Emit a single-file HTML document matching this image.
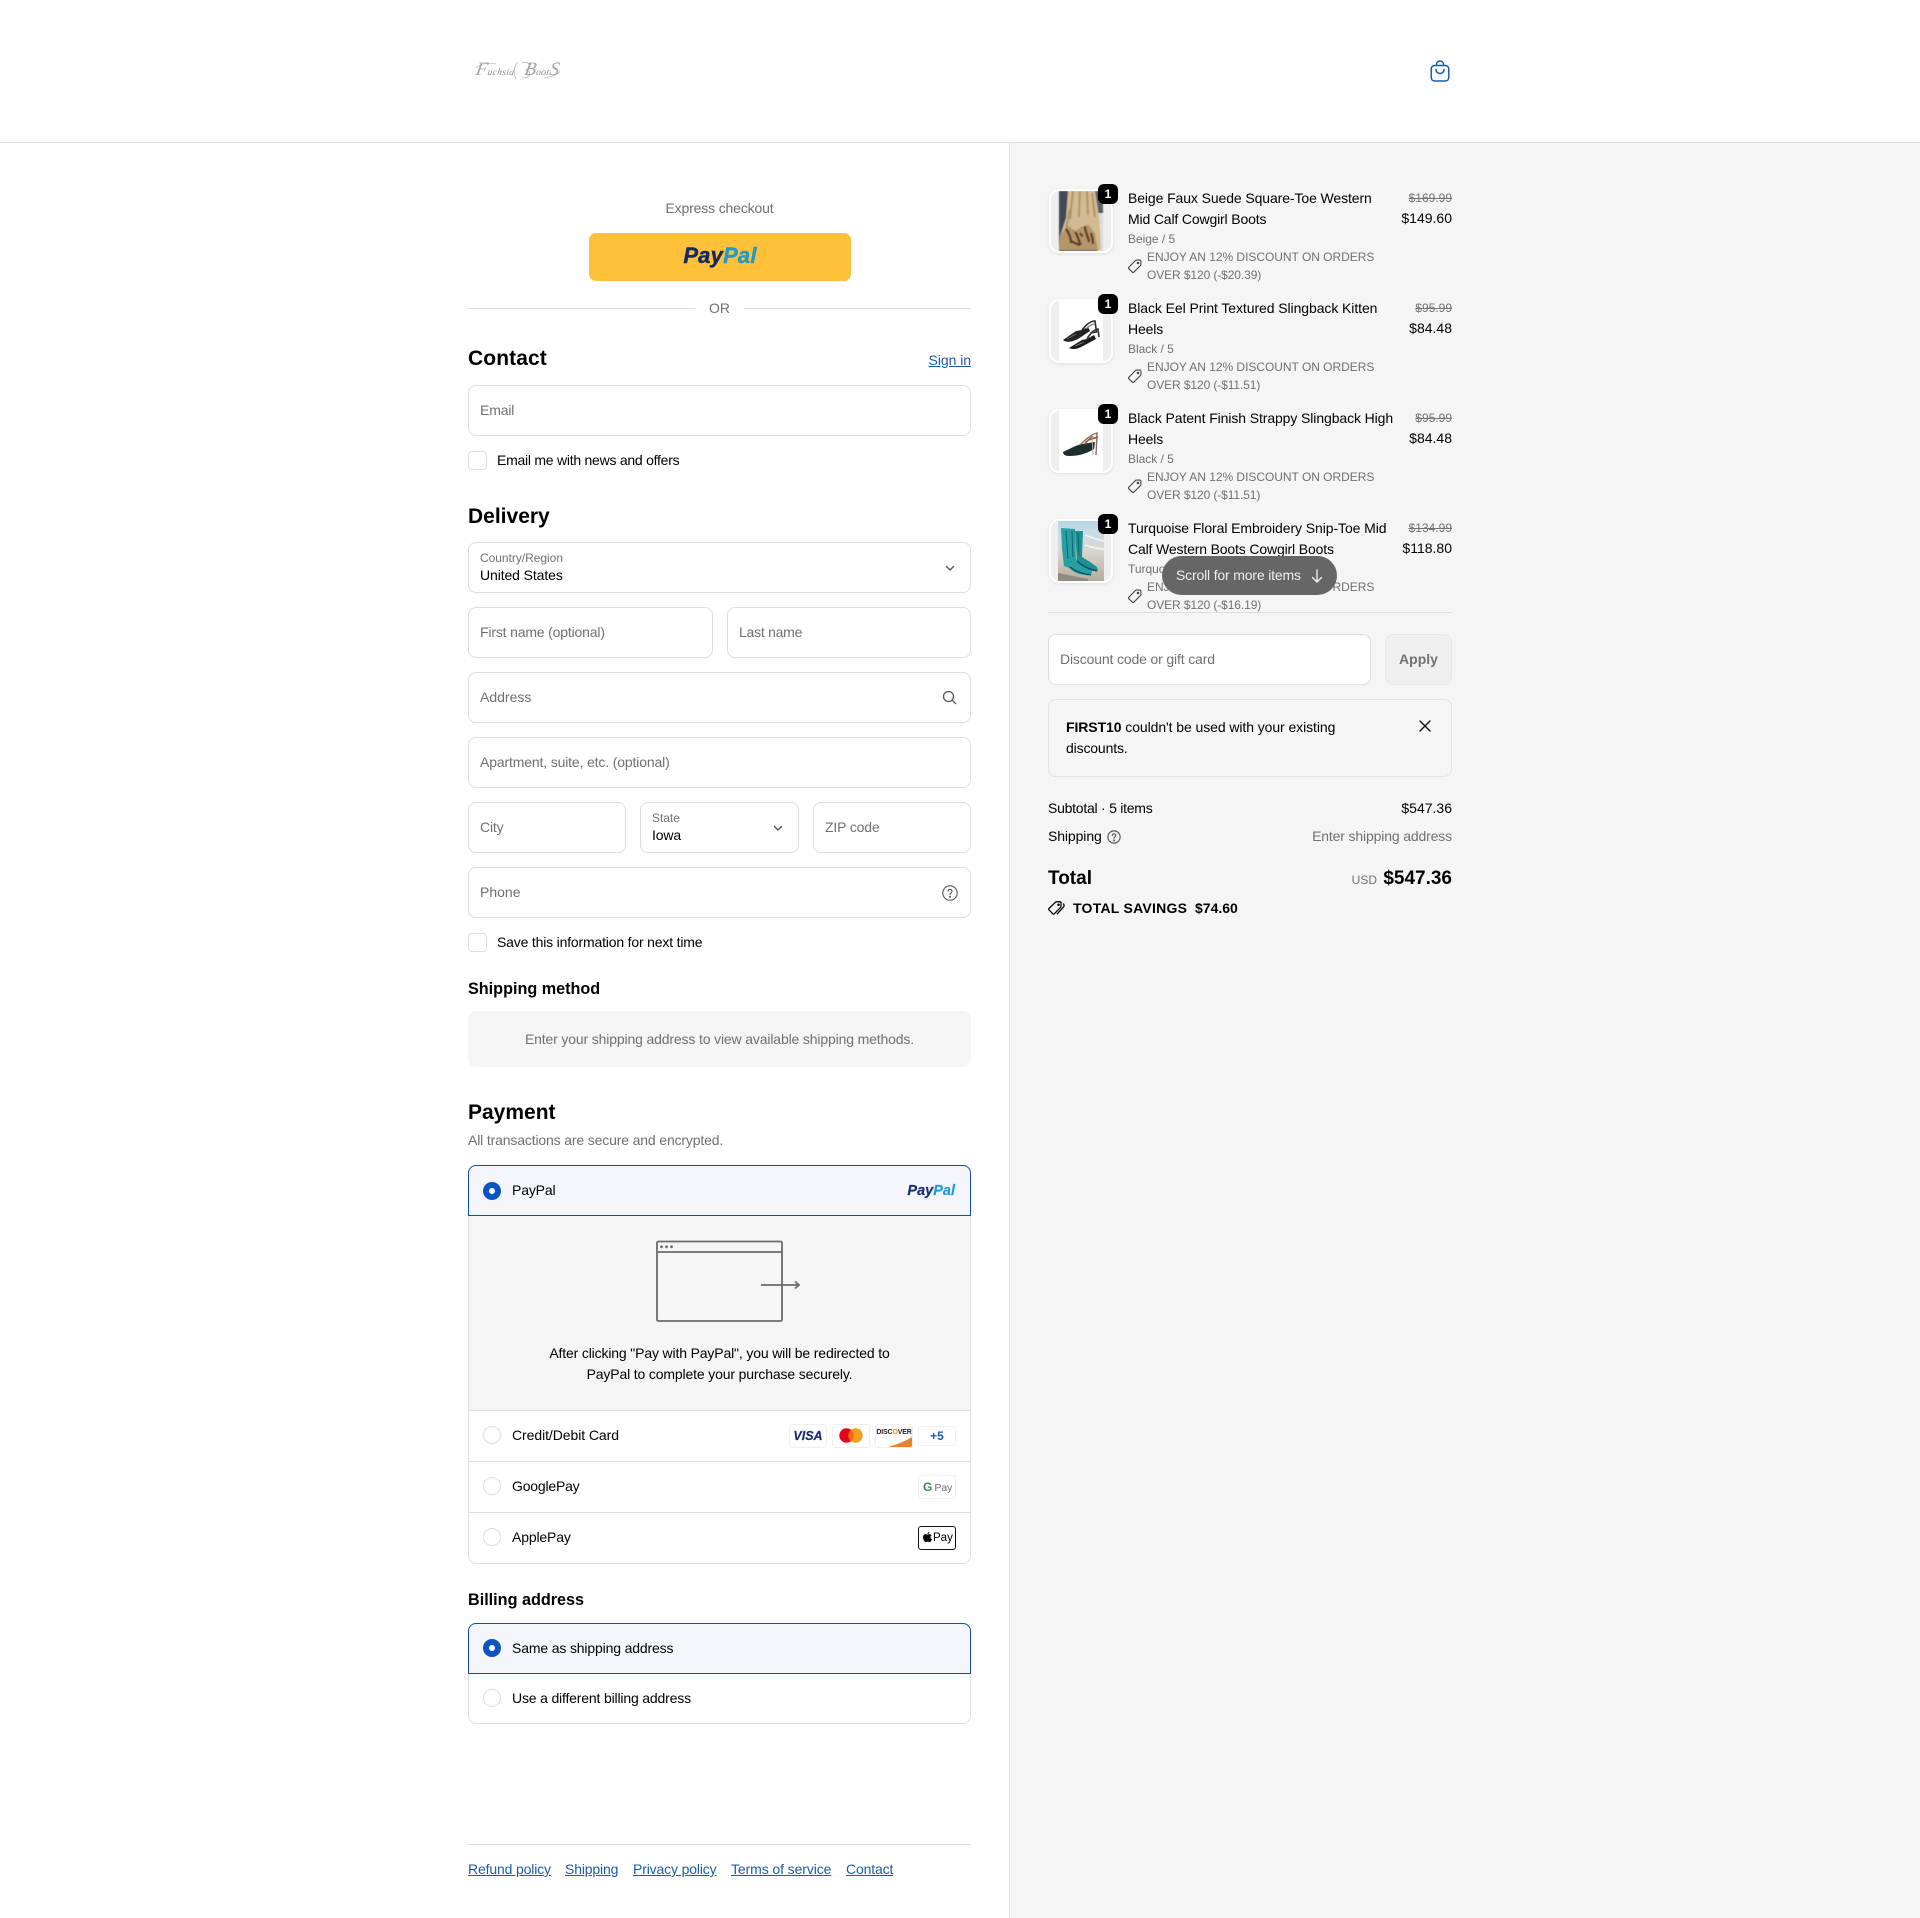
<!DOCTYPE html>
<html lang="en"><head><meta charset="utf-8"><title>Checkout</title>
<style>
html,body{margin:0;padding:0;background:#fff}
#p{position:relative;width:1920px;height:1918px;overflow:hidden;background:#fff;font-family:"Liberation Sans",Arial,sans-serif;font-size:14px;color:#000}
.t{position:absolute;white-space:nowrap;line-height:20px;height:20px;letter-spacing:-.15px}
.z{letter-spacing:0}
.g{color:#707070}
.b{font-weight:700}
.r{text-align:right}
.f{position:absolute;box-sizing:border-box;border:1px solid #dedede;border-radius:8px;background:#fff;height:51px}
.a{color:#1a5ca8;text-decoration:underline}
.cb{position:absolute;box-sizing:border-box;left:468px;width:19px;height:19px;border:1px solid #dedede;border-radius:4px;background:#fff}
.rd{position:absolute;box-sizing:border-box;left:483px;width:18px;height:18px;border-radius:50%;border:1px solid #dedede;background:#fff}
.rs{position:absolute;box-sizing:border-box;left:483px;width:18px;height:18px;border-radius:50%;background:#fff;border:6px solid #0b55c0}
.pi{position:absolute;box-sizing:border-box;width:38px;height:24px;border:1px solid #efefef;border-radius:3px;background:#fff;overflow:hidden;white-space:nowrap}
.th{position:absolute;left:1049px;width:64px;height:64px;box-sizing:border-box;border-radius:10px;overflow:hidden;background:#eee;border:2px solid #fff;box-shadow:0 1px 3px rgba(0,0,0,.1)}
.bd{position:absolute;left:1098px;width:20px;height:20px;border-radius:6px;background:#000;color:#fff;font-weight:700;font-size:12px;line-height:20px;text-align:center}
.s{position:absolute;display:block}
.m{font-size:12px;letter-spacing:-.03px}
</style></head><body><div id="p">

<!-- header -->
<div style="position:absolute;left:0;top:142px;width:1920px;height:1px;background:#dedede"></div>
<div class="t" style="left:476px;top:60px;font-family:'Liberation Serif',serif;font-style:italic;font-size:9.5px;color:#8a8a8a;letter-spacing:.35px;transform:skewX(-10deg)"><span style="font-size:19px;color:#a5a5a5">F</span>uchsia <span style="font-size:19px;color:#a5a5a5;margin-left:7px">B</span>oot<span style="font-size:19px;color:#a5a5a5">S</span></div>
<svg class="s" style="left:474px;top:58px" width="90" height="26" viewBox="0 0 90 26" fill="none" stroke="#a0a0a0" stroke-width=".6"><path d="M2 10C7 5 14 5 22 6"/><path d="M44 4C40 8 39 14 42 21"/><path d="M48 5C55 3 60 8 52 12c6 1 5 8-4 8"/><path d="M70 20c6-1 14-3 16-7"/></svg>
<svg class="s" style="left:1430px;top:60px" width="20" height="22" viewBox="0 0 20 22" fill="none" stroke="#1a5ca8" stroke-width="1.5" stroke-linecap="round"><rect x="1.200" y="5.500" width="17.600" height="15.500" rx="3.500"/><path d="M6.500 5.500V4.500a3.500 3.500 0 0 1 7 0v1"/><path d="M6 9.500a4 4 0 0 0 8 0"/></svg>

<!-- sidebar -->
<div style="position:absolute;left:1009px;top:143px;width:911px;height:1775px;background:#f5f5f5;border-left:1px solid #dedede;box-sizing:border-box"></div>

<!-- express -->
<div class="t g" style="left:468px;width:503px;text-align:center;top:198px">Express checkout</div>
<div style="position:absolute;left:589px;top:233px;width:262px;height:48px;border-radius:7px;background:#ffc03a"></div>
<div class="t" style="left:589px;width:262px;text-align:center;top:245px;font-size:22px;line-height:22px;height:22px;font-weight:700;font-style:italic;color:#142a60;letter-spacing:.2px;-webkit-text-stroke:.4px">Pay<span style="color:#1f9bc6">Pal</span></div>
<div style="position:absolute;left:468px;top:308px;width:227px;height:1px;background:#dedede"></div>
<div style="position:absolute;left:744px;top:308px;width:227px;height:1px;background:#dedede"></div>
<div class="t g z" style="left:468px;width:503px;text-align:center;top:298px">OR</div>

<!-- contact -->
<div class="t b z" style="left:468px;top:349px;font-size:21px;letter-spacing:.1px">Contact</div>
<div class="t a r" style="right:949px;top:350px;letter-spacing:-.05px">Sign in</div>
<div class="f" style="left:468px;top:385px;width:503px"></div>
<div class="t g" style="left:480px;top:400px">Email</div>
<div class="cb" style="top:451px"></div>
<div class="t" style="left:497px;top:450px;letter-spacing:-.25px">Email me with news and offers</div>

<!-- delivery -->
<div class="t b z" style="left:468px;top:507px;font-size:21px">Delivery</div>
<div class="f" style="left:468px;top:542px;width:503px"></div>
<div class="t g m" style="left:480px;top:548px">Country/Region</div>
<div class="t" style="left:480px;top:565px;letter-spacing:-.1px">United States</div>
<svg class="s" style="left:944px;top:562px" width="12" height="12" viewBox="0 0 12 12" fill="none" stroke="#555" stroke-width="1.400" stroke-linecap="round" stroke-linejoin="round"><path d="M2.500 4.500 6 8l3.500-3.500"/></svg>

<div class="f" style="left:468px;top:607px;width:245px"></div>
<div class="t g" style="left:480px;top:622px;letter-spacing:-.17px">First name (optional)</div>
<div class="f" style="left:727px;top:607px;width:244px"></div>
<div class="t g" style="left:739px;top:622px;letter-spacing:-.25px">Last name</div>

<div class="f" style="left:468px;top:672px;width:503px"></div>
<div class="t g z" style="left:480px;top:687px">Address</div>
<svg class="s" style="left:942px;top:690px" width="15" height="15" viewBox="0 0 15 15" fill="none" stroke="#555" stroke-width="1.300" stroke-linecap="round"><circle cx="6.500" cy="6.500" r="5"/><path d="m10.300 10.300 3.400 3.400"/></svg>

<div class="f" style="left:468px;top:737px;width:503px"></div>
<div class="t g" style="left:480px;top:752px">Apartment, suite, etc. (optional)</div>

<div class="f" style="left:468px;top:802px;width:158px"></div>
<div class="t g" style="left:480px;top:817px">City</div>
<div class="f" style="left:640px;top:802px;width:159px"></div>
<div class="t g m" style="left:652px;top:808px">State</div>
<div class="t" style="left:652px;top:825px">Iowa</div>
<svg class="s" style="left:772px;top:822px" width="12" height="12" viewBox="0 0 12 12" fill="none" stroke="#555" stroke-width="1.400" stroke-linecap="round" stroke-linejoin="round"><path d="M2.500 4.500 6 8l3.500-3.500"/></svg>
<div class="f" style="left:813px;top:802px;width:158px"></div>
<div class="t g" style="left:825px;top:817px">ZIP code</div>

<div class="f" style="left:468px;top:867px;width:503px"></div>
<div class="t g z" style="left:480px;top:882px">Phone</div>
<svg class="s" style="left:942px;top:885px" width="16" height="16" viewBox="0 0 16 16" fill="none" stroke="#555" stroke-width="1.100" stroke-linecap="round"><circle cx="8" cy="8" r="7.200"/><path d="M6 6.200a2 2 0 1 1 3 1.800c-.7.400-1 .8-1 1.600"/><circle cx="8" cy="11.800" r=".5" fill="#555"/></svg>
<div class="cb" style="top:933px"></div>
<div class="t" style="left:497px;top:932px;letter-spacing:-.18px">Save this information for next time</div>

<div class="t b z" style="left:468px;top:979px;font-size:16.200px">Shipping method</div>
<div style="position:absolute;left:468px;top:1011px;width:503px;height:56px;border-radius:8px;background:#f5f5f5"></div>
<div class="t g" style="left:468px;width:503px;text-align:center;top:1029px">Enter your shipping address to view available shipping methods.</div>

<!-- payment -->
<div class="t b z" style="left:468px;top:1103px;font-size:21px">Payment</div>
<div class="t g" style="left:468px;top:1130px">All transactions are secure and encrypted.</div>

<div style="position:absolute;left:468px;top:1215px;width:503px;height:349px;box-sizing:border-box;border:1px solid #dedede;border-top:0;border-radius:0 0 8px 8px;background:#fff"></div>
<div style="position:absolute;left:469px;top:1216px;width:501px;height:195px;background:#f5f5f5;border-bottom:1px solid #dedede;box-sizing:border-box"></div>
<div style="position:absolute;left:468px;top:1165px;width:503px;height:51px;box-sizing:border-box;border:1px solid #0f4f9e;border-radius:8px 8px 0 0;background:#f4f6fc"></div>
<div class="rs" style="top:1182px"></div>
<div class="t" style="left:512px;top:1180px">PayPal</div>
<div class="t r z" style="right:965px;top:1181px;font-size:14.500px;font-weight:700;font-style:italic;color:#1b2f6b;-webkit-text-stroke:.2px">Pay<span style="color:#1f9bd6">Pal</span></div>

<svg class="s" style="left:655px;top:1239px" width="148" height="85" viewBox="0 0 148 85" fill="none" stroke="#6b6b6b" stroke-width="1.800"><rect x="2" y="2.500" width="125" height="79.500" rx="1.500"/><path d="M2 13h125"/><path d="M106 46h38M140 42.500l4 3.500-4 3.500"/><circle cx="6.500" cy="7.800" r="1.400" fill="#6b6b6b" stroke="none"/><circle cx="11.500" cy="7.800" r="1.400" fill="#6b6b6b" stroke="none"/><circle cx="16.500" cy="7.800" r="1.400" fill="#6b6b6b" stroke="none"/></svg>
<div class="t" style="left:468px;width:503px;text-align:center;top:1343px">After clicking "Pay with PayPal", you will be redirected to</div>
<div class="t" style="left:468px;width:503px;text-align:center;top:1364px">PayPal to complete your purchase securely.</div>

<div class="rd" style="top:1426px"></div>
<div class="t" style="left:512px;top:1425px;letter-spacing:-.07px">Credit/Debit Card</div>
<div class="pi" style="left:789px;top:1424px;text-align:center;font:italic 700 12.500px/22px 'Liberation Sans',sans-serif;color:#1a2a70;-webkit-text-stroke:.2px">VISA</div>
<div class="pi" style="left:832px;top:1424px"><svg width="36" height="22" viewBox="0 0 36 22"><circle cx="13.500" cy="10.500" r="7.200" fill="#e2051b"/><circle cx="22.500" cy="10.500" r="7.200" fill="#f69e1e"/><path d="M18 4.900a7.200 7.200 0 0 1 0 11.200 7.200 7.200 0 0 1 0-11.200" fill="#f4670f"/></svg></div>
<div class="pi" style="left:875px;top:1424px;font:700 7px/15px 'Liberation Sans',sans-serif;color:#222;text-align:center;letter-spacing:-.15px"><span style="position:relative;z-index:1">DISC<span style="color:#e88a2a">O</span>VER</span><svg style="position:absolute;left:0;top:0" width="36" height="22" viewBox="0 0 36 22"><path d="M36 12C28 17 19 20 12 22H36Z" fill="#e8832a"/></svg></div>
<div class="pi" style="left:918px;top:1426px;height:20px;text-align:center;font:700 12px/18px 'Liberation Sans',sans-serif;color:#1a5ca8">+5</div>

<div style="position:absolute;left:469px;top:1461px;width:501px;height:1px;background:#dedede"></div>
<div class="rd" style="top:1477px"></div>
<div class="t" style="left:512px;top:1476px;letter-spacing:-.2px">GooglePay</div>
<div class="pi" style="left:918px;top:1475px;font:10.500px/22px 'Liberation Sans',sans-serif;color:#6f6f6f;padding-left:4px"><span style="font-weight:700;font-size:12px;color:#3a8a55">G</span><span style="margin-left:2px">Pay</span></div>

<div style="position:absolute;left:469px;top:1512px;width:501px;height:1px;background:#dedede"></div>
<div class="rd" style="top:1528px"></div>
<div class="t" style="left:512px;top:1527px">ApplePay</div>
<div class="pi" style="left:918px;top:1526px;border-color:#111;font:11.500px/22px 'Liberation Sans',sans-serif;color:#000;padding-left:14px">Pay<svg style="position:absolute;left:4px;top:5px" width="9" height="11" viewBox="0 0 9 11"><path d="M6.400 0c.1.9-.7 2.100-1.900 2.100C4.400 1 5.400.1 6.400 0ZM4.500 2.600c.5 0 1.200-.5 2.100-.5.800 0 1.600.4 2 1.100-1.700 1-1.400 3.400.4 4.100-.4 1.100-1.400 2.800-2.400 2.800-.7 0-1-.5-1.900-.5s-1.200.5-1.900.5C1.700 10.100 0 7.700 0 5.400 0 3.300 1.300 2.100 2.600 2.100c.8 0 1.400.5 1.900.5Z" fill="#000"/></svg></div>

<!-- billing -->
<div class="t b z" style="left:468px;top:1590px;font-size:16.200px">Billing address</div>
<div style="position:absolute;left:468px;top:1672px;width:503px;height:52px;box-sizing:border-box;border:1px solid #dedede;border-top:0;border-radius:0 0 8px 8px;background:#fff"></div>
<div style="position:absolute;left:468px;top:1623px;width:503px;height:51px;box-sizing:border-box;border:1px solid #0f4f9e;border-radius:8px 8px 0 0;background:#f4f6fc"></div>
<div class="rs" style="top:1639px"></div>
<div class="t" style="left:512px;top:1638px">Same as shipping address</div>
<div class="rd" style="top:1689px"></div>
<div class="t" style="left:512px;top:1688px;letter-spacing:-.17px">Use a different billing address</div>

<!-- footer -->
<div style="position:absolute;left:468px;top:1844px;width:503px;height:1px;background:#dedede"></div>
<div class="t a" style="left:468px;top:1859px">Refund policy</div>
<div class="t a" style="left:565px;top:1859px">Shipping</div>
<div class="t a" style="left:633px;top:1859px">Privacy policy</div>
<div class="t a" style="left:731px;top:1859px;letter-spacing:-.1px">Terms of service</div>
<div class="t a" style="left:846px;top:1859px">Contact</div>

<!-- ITEM 1 -->
<div class="th" style="top:189px"><svg width="60" height="60" viewBox="2 2 60 60"><defs><filter id="bl"><feGaussianBlur stdDeviation=".45"/></filter><filter id="bl2"><feGaussianBlur stdDeviation=".3"/></filter><linearGradient id="sk" x1="0" y1="0" x2="0" y2="1"><stop offset="0" stop-color="#b6d5e6"/><stop offset=".28" stop-color="#cfdde2"/><stop offset=".5" stop-color="#d9d6cc"/><stop offset="1" stop-color="#b5ae9f"/></linearGradient></defs><g filter="url(#bl)"><rect x="10" y="2" width="44" height="60" fill="#3f4a54"/><rect x="46" y="2" width="8" height="20" fill="#5b646c"/><rect x="49" y="24" width="5" height="38" fill="#dcdcdc"/><path d="M19 2h27l4 25 2 34H10l1-14 6-18Z" fill="#d2ba92"/><path d="M24 2l-3 28M31 2l-1 26M38 2l1 24M43 4l3 24M21 20l-4 20" stroke="#ad9268" stroke-width="1.800" fill="none"/><path d="M11 46l8-9 8 5 5-4 8-2 6 9 3 16H10Z" fill="#b5966a"/><path d="M17 40c3 4 5 8 5 14M26 43c3 3 3 8 6 13M36 37c0 6 3 10 4 16M21 52c4 1 6 3 10 4M42 44c1 4 2 7 2 11M31 44c1 2 2 3 3 3" stroke="#5a3c20" stroke-width="2.300" fill="none"/></g></svg></div>
<div class="bd" style="top:184px">1</div>
<div class="t" style="left:1128px;top:188px;letter-spacing:-.1px">Beige Faux Suede Square-Toe Western</div>
<div class="t" style="left:1128px;top:209px">Mid Calf Cowgirl Boots</div>
<div class="t g m" style="left:1128px;top:229px">Beige / 5</div>
<svg class="s" style="left:1128px;top:259px" width="14" height="14" viewBox="0 0 14 14" fill="none" stroke="#444" stroke-width="1.100" stroke-linejoin="round"><path d="M.8 8.300 7.500 1.500c.3-.3.600-.4 1-.4h3.200c.7 0 1.200.5 1.200 1.200v3.200c0 .4-.1.700-.4 1l-6.700 6.700c-.4.400-1 .4-1.400 0L.8 9.700c-.4-.4-.4-1 0-1.400Z"/><circle cx="10" cy="4" r=".7" fill="#444"/></svg>
<div class="t g m" style="left:1147px;top:247px">ENJOY AN 12% DISCOUNT ON ORDERS</div>
<div class="t g m" style="left:1147px;top:265px;letter-spacing:-.1px">OVER $120 (-$20.39)</div>
<div class="t g r z" style="right:468px;top:188px;font-size:12px;text-decoration:line-through">$169.99</div>
<div class="t r z" style="right:468px;top:208px">$149.60</div>

<!-- ITEM 2 -->
<div class="th" style="top:299px"><svg width="60" height="60" viewBox="2 2 60 60"><rect x="10" y="2" width="44" height="60" fill="#fff"/><g filter="url(#bl2)"><path d="M14 41 27 32l6-1 6-3 2 4-12 8c-6 3-11 4-15 1Z" fill="#222"/><path d="M33 31C37 26 41 22 46 22l1.500 11-6 1" stroke="#2b2b2b" stroke-width="1.600" fill="none"/><path d="M37 30c3-3 6-5 9-5" stroke="#777" stroke-width="1.200" fill="none"/><path d="M20 49 33 41l5-1 7-4 2 4-13 7c-5 3-10 4-14 2Z" fill="#1a1a1a"/><path d="M38 40c3-5 6-9 11-10l1 8" stroke="#333" stroke-width="1.600" fill="none"/><path d="M18 40l9-5M26 47l9-4" stroke="#8a8a8a" stroke-width=".7" fill="none"/></g></svg></div>
<div class="bd" style="top:294px">1</div>
<div class="t" style="left:1128px;top:298px;letter-spacing:-.08px">Black Eel Print Textured Slingback Kitten</div>
<div class="t" style="left:1128px;top:319px">Heels</div>
<div class="t g m" style="left:1128px;top:339px">Black / 5</div>
<svg class="s" style="left:1128px;top:369px" width="14" height="14" viewBox="0 0 14 14" fill="none" stroke="#444" stroke-width="1.100" stroke-linejoin="round"><path d="M.8 8.300 7.500 1.500c.3-.3.600-.4 1-.4h3.200c.7 0 1.200.5 1.200 1.200v3.200c0 .4-.1.700-.4 1l-6.700 6.700c-.4.400-1 .4-1.400 0L.8 9.700c-.4-.4-.4-1 0-1.400Z"/><circle cx="10" cy="4" r=".7" fill="#444"/></svg>
<div class="t g m" style="left:1147px;top:357px">ENJOY AN 12% DISCOUNT ON ORDERS</div>
<div class="t g m" style="left:1147px;top:375px;letter-spacing:-.1px">OVER $120 (-$11.51)</div>
<div class="t g r z" style="right:468px;top:298px;font-size:12px;text-decoration:line-through">$95.99</div>
<div class="t r z" style="right:468px;top:318px">$84.48</div>

<!-- ITEM 3 -->
<div class="th" style="top:409px"><svg width="60" height="60" viewBox="2 2 60 60"><rect x="10" y="2" width="44" height="60" fill="#fff"/><g filter="url(#bl2)"><path d="M14 43c8-4 14-7 19-8l13-2-1 7c-8 5-16 7-25 7-3 0-6-1-6-4Z" fill="#1a2f2e"/><path d="M31 36c5-5 10-10 17-12l-1 22" stroke="#8a6a60" stroke-width="1.400" fill="none"/><path d="M39 31l10-3M36 34l8-7" stroke="#a05a40" stroke-width="1.800" fill="none"/><path d="M43 26l1 20" stroke="#b9a8a0" stroke-width="1" fill="none"/></g></svg></div>
<div class="bd" style="top:404px">1</div>
<div class="t" style="left:1128px;top:408px;letter-spacing:-.1px">Black Patent Finish Strappy Slingback High</div>
<div class="t" style="left:1128px;top:429px">Heels</div>
<div class="t g m" style="left:1128px;top:449px">Black / 5</div>
<svg class="s" style="left:1128px;top:479px" width="14" height="14" viewBox="0 0 14 14" fill="none" stroke="#444" stroke-width="1.100" stroke-linejoin="round"><path d="M.8 8.300 7.500 1.500c.3-.3.600-.4 1-.4h3.200c.7 0 1.200.5 1.200 1.200v3.200c0 .4-.1.700-.4 1l-6.700 6.700c-.4.400-1 .4-1.400 0L.8 9.700c-.4-.4-.4-1 0-1.400Z"/><circle cx="10" cy="4" r=".7" fill="#444"/></svg>
<div class="t g m" style="left:1147px;top:467px">ENJOY AN 12% DISCOUNT ON ORDERS</div>
<div class="t g m" style="left:1147px;top:485px;letter-spacing:-.1px">OVER $120 (-$11.51)</div>
<div class="t g r z" style="right:468px;top:408px;font-size:12px;text-decoration:line-through">$95.99</div>
<div class="t r z" style="right:468px;top:428px">$84.48</div>

<!-- ITEM 4 -->
<div class="th" style="top:519px"><svg width="60" height="60" viewBox="2 2 60 60"><rect x="9" y="2" width="46" height="60" fill="url(#sk)"/><g filter="url(#bl2)"><path d="M36 16c6 2 12 5 19 6M36 26c6 2 12 4 19 4" stroke="#f2f5f5" stroke-width="1.500" fill="none"/><path d="M9 54l30 6v2H9Z" fill="#8f8b80"/><path d="M26 12l8 0-1 26 8 5 7 5 1 4c-7 1-13-3-21-9Z" fill="#1e8f95"/><path d="M12 9l14 1 1 30 8 7 8 5-1 4c-9 1-17-2-22-7l-5-2-2-17Z" fill="#27a0a4"/><path d="M17 12l2 28M23 12l1 26M29 14l1 22" stroke="#14686e" stroke-width="1.100" fill="none"/><path d="M21 48c5 4 12 7 21 8M28 42c5 5 11 8 20 10" stroke="#0f4f58" stroke-width="1.300" fill="none"/></g></svg></div>
<div class="bd" style="top:514px">1</div>
<div class="t" style="left:1128px;top:518px;letter-spacing:-.08px">Turquoise Floral Embroidery Snip-Toe Mid</div>
<div class="t" style="left:1128px;top:539px">Calf Western Boots Cowgirl Boots</div>
<div class="t g m" style="left:1128px;top:559px">Turquoise / 5</div>
<svg class="s" style="left:1128px;top:589px" width="14" height="14" viewBox="0 0 14 14" fill="none" stroke="#444" stroke-width="1.100" stroke-linejoin="round"><path d="M.8 8.300 7.500 1.500c.3-.3.600-.4 1-.4h3.200c.7 0 1.200.5 1.200 1.200v3.200c0 .4-.1.700-.4 1l-6.700 6.700c-.4.400-1 .4-1.400 0L.8 9.700c-.4-.4-.4-1 0-1.400Z"/><circle cx="10" cy="4" r=".7" fill="#444"/></svg>
<div class="t g m" style="left:1147px;top:577px">ENJOY AN 12% DISCOUNT ON ORDERS</div>
<div class="t g m" style="left:1147px;top:595px;letter-spacing:-.1px">OVER $120 (-$16.19)</div>
<div class="t g r z" style="right:468px;top:518px;font-size:12px;text-decoration:line-through">$134.99</div>
<div class="t r z" style="right:468px;top:538px">$118.80</div>

<div style="position:absolute;left:1162px;top:556px;width:175px;height:39px;border-radius:20px;background:#666"></div>
<div class="t" style="left:1176px;top:565px;color:#eee;letter-spacing:-.17px">Scroll for more items</div>
<svg class="s" style="left:1310px;top:568px" width="14" height="16" viewBox="0 0 14 16" fill="none" stroke="#eee" stroke-width="1.400" stroke-linecap="round" stroke-linejoin="round"><path d="M7 2v12M2.500 9.500 7 14l4.500-4.500"/></svg>

<div style="position:absolute;left:1048px;top:612px;width:404px;height:1px;background:#dedede"></div>

<!-- discount -->
<div class="f" style="left:1048px;top:634px;width:323px"></div>
<div class="t g" style="left:1060px;top:649px">Discount code or gift card</div>
<div style="position:absolute;box-sizing:border-box;left:1385px;top:634px;width:67px;height:51px;border-radius:8px;background:#efefef;border:1px solid #e6e6e6;text-align:center;line-height:49px;font-weight:700;color:#707070">Apply</div>

<div style="position:absolute;box-sizing:border-box;left:1048px;top:699px;width:404px;height:78px;border:1px solid #e2e2e2;border-radius:8px"></div>
<div class="t" style="left:1066px;top:717px;letter-spacing:-.08px"><b>FIRST10</b> couldn't be used with your existing</div>
<div class="t" style="left:1066px;top:738px">discounts.</div>
<svg class="s" style="left:1419px;top:720px" width="12" height="12" viewBox="0 0 12 12" fill="none" stroke="#111" stroke-width="1.400" stroke-linecap="round"><path d="M1 1l10 10M11 1 1 11"/></svg>

<!-- totals -->
<div class="t" style="left:1048px;top:798px;letter-spacing:-.25px">Subtotal · 5 items</div>
<div class="t r z" style="right:468px;top:798px">$547.36</div>
<div class="t" style="left:1048px;top:826px;letter-spacing:-.1px">Shipping</div>
<svg class="s" style="left:1107px;top:830px" width="14" height="14" viewBox="0 0 16 16" fill="none" stroke="#555" stroke-width="1.300" stroke-linecap="round"><circle cx="8" cy="8" r="7"/><path d="M6 6.200a2 2 0 1 1 3 1.800c-.7.400-1 .8-1 1.600"/><circle cx="8" cy="11.800" r=".5" fill="#555"/></svg>
<div class="t g r" style="right:468px;top:826px">Enter shipping address</div>
<div class="t b z" style="left:1048px;top:869px;font-size:19px">Total</div>
<div class="t b r z" style="right:468px;top:869px;font-size:19px">$547.36</div>
<div class="t g r z" style="right:543px;top:870px;font-size:12px">USD</div>
<svg class="s" style="left:1048px;top:900px" width="18" height="16" viewBox="0 0 18 16" fill="none" stroke="#000" stroke-width="1.300" stroke-linejoin="round"><path d="M1 8.500 7.500 2.200c.3-.3.600-.4 1-.4h3.500c.6 0 1 .4 1 1v3.500c0 .4-.1.700-.4 1L6.300 13.800c-.4.400-1 .4-1.400 0L1 9.900c-.4-.4-.4-1 0-1.400Z"/><path d="M15.200 3.500c.6.600.9 1.300.9 2 0 .6-.2 1.200-.7 1.700l-6.500 7"/><circle cx="10.500" cy="4.800" r=".6" fill="#000"/></svg>
<div class="t b" style="left:1073px;top:898px;font-size:14px;letter-spacing:.25px">TOTAL SAVINGS</div>
<div class="t b z" style="left:1195px;top:898px;font-size:14px">$74.60</div>

</div></body></html>
